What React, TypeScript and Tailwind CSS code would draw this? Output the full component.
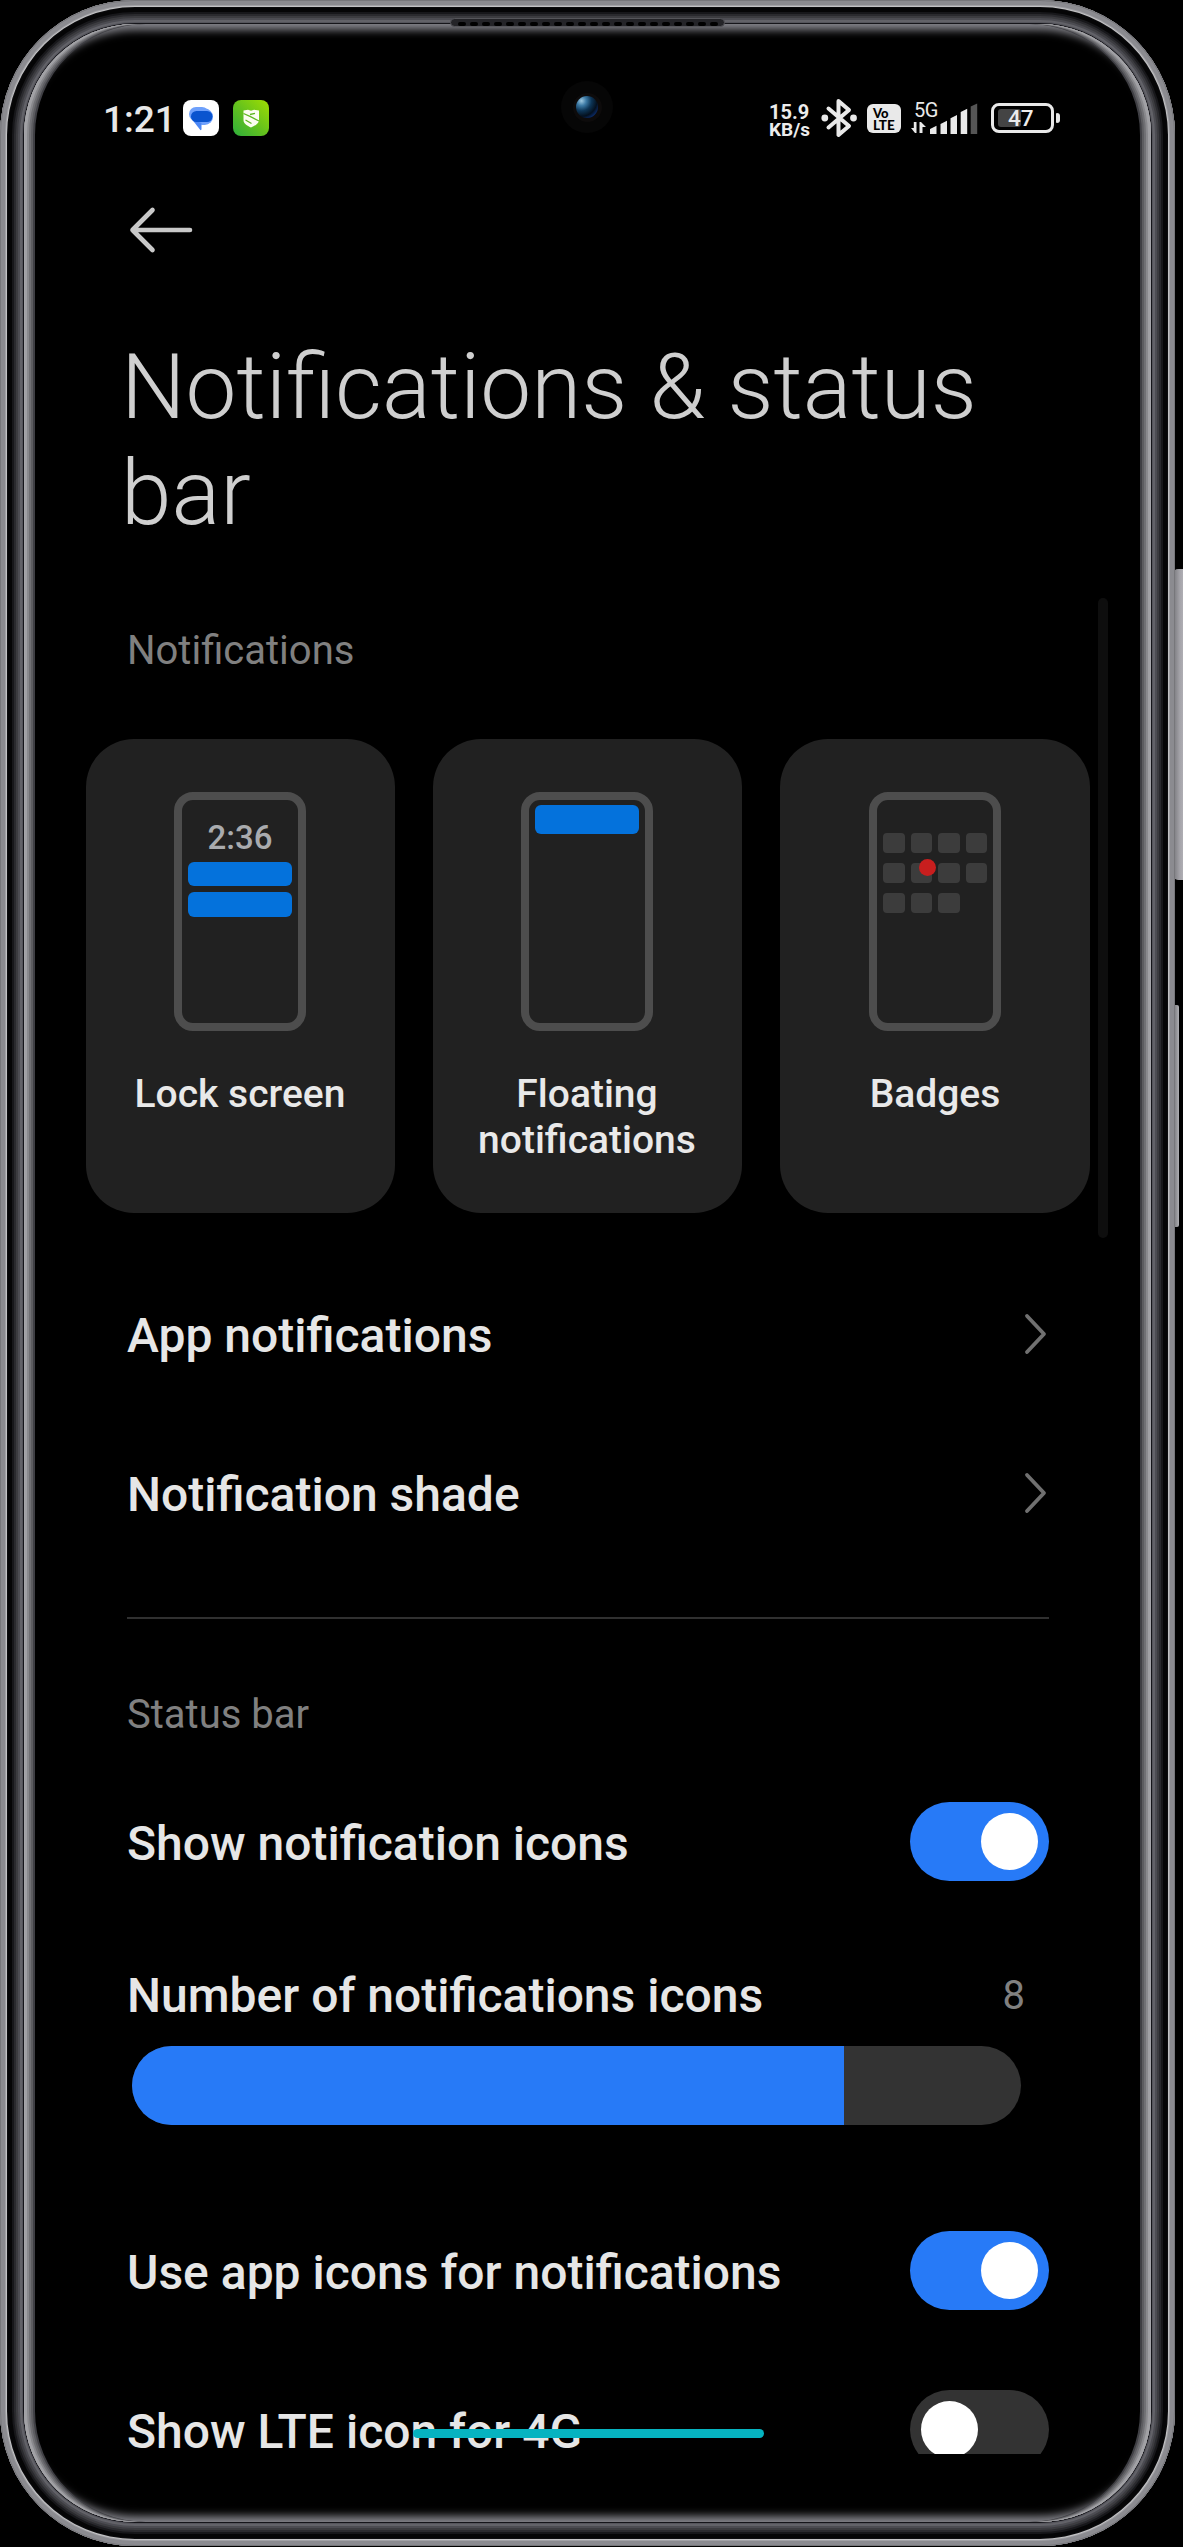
import React from "react";

const labelBase = "block font-medium text-[#e6e6e6] text-[48px] leading-[56px] whitespace-nowrap";

function Toggle({ on }: { on?: boolean }) {
  return (
    <span className={on ? "flex h-[79px] w-[139px] shrink-0 items-center justify-end rounded-full bg-[#277af7] p-[11px]" : "flex h-[79px] w-[139px] shrink-0 items-center rounded-full bg-[#333333] p-[11px]"}>
      <span className="h-[57px] w-[57px] rounded-full bg-white" />
    </span>
  );
}

function Chevron() {
  return (
    <svg className="mb-[3px] mr-[1px]" width="24" height="42" viewBox="0 0 24 42" fill="none" stroke="#707070" strokeWidth="3.8" strokeLinecap="round" strokeLinejoin="round">
      <path d="M3 3 L20 21 L3 39" />
    </svg>
  );
}

function Card({ label, wide, children }: { label: React.ReactNode; wide?: boolean; children: React.ReactNode }) {
  return (
    <div className={wide ? "flex h-[474px] w-[310px] shrink-0 flex-col items-center rounded-[48px] bg-[#212121] pt-[53px]" : "flex h-[474px] w-[309px] shrink-0 flex-col items-center rounded-[48px] bg-[#212121] pr-px pt-[53px]"}>
      <div className="h-[239px] w-[132px] rounded-[19px] border-[8px] border-[#4d4d4d] px-[6px]">{children}</div>
      <div className="mt-[40px] text-center text-[39px] font-medium leading-[46px] text-[#e9e9e9]">{label}</div>
    </div>
  );
}

function StatusBar() {
  return (
    <div className="flex h-[54px] items-center">
      <div className="w-[80px] pt-[3px] text-[37px] font-medium leading-[54px] text-[#e8e8e8]">1:21</div>
      <svg width="36" height="36" viewBox="0 0 36 36">
        <rect width="36" height="36" rx="8" fill="#fff" />
        <rect x="6" y="7" width="20" height="14" rx="7" fill="#6ea0fb" />
        <rect x="11" y="8.500" width="19" height="16.500" rx="8.200" fill="#6ea0fb" />
        <path d="M9.500 20l8 10.200c0.800 0 1-0.500 1-1.200V23z" fill="#4c87f5" />
        <rect x="8" y="11" width="21.500" height="11" rx="5.500" fill="#0a54cf" />
      </svg>
      <svg className="ml-[14px]" width="36" height="36" viewBox="0 0 36 36">
        <defs>
          <linearGradient id="lime" x1="0" y1="1" x2="1" y2="0">
            <stop offset="0" stopColor="#2dae3c" />
            <stop offset="0.5" stopColor="#66c21c" />
            <stop offset="1" stopColor="#a0de02" />
          </linearGradient>
        </defs>
        <rect width="36" height="36" rx="8" fill="url(#lime)" />
        <path d="M10.500 10.500l4.500-.7l3 1l3-1l5 .7v9.500c0 4-5 6-8 7.500c-3-1.500-7.500-3.500-7.500-7.500z" fill="#fbfdf0" />
        <path d="M10.500 13.500l7 3.200l8.500 4.300M12.500 20l6 3.500M17 14.500l5-1.200" stroke="#5fb821" strokeWidth="1.300" fill="none" />
      </svg>
      <div className="ml-[500px] w-[42px] pt-[6px] text-[20px] font-bold leading-[18px] text-[#ececec]">
        <div>15.9</div>
        <div className="text-[19px]">KB/s</div>
      </div>
      <svg className="ml-[10px]" width="37" height="40" viewBox="0 0 37 40" fill="none" stroke="#e9e9e9" strokeWidth="4" strokeLinecap="round" strokeLinejoin="round">
        <path d="M7.500 10.500 L28 28 L17.500 37 V3 L28 12 L7.500 29.500" />
        <circle cx="3.800" cy="20" r="3.400" fill="#e9e9e9" stroke="none" />
        <circle cx="32.500" cy="20" r="3.400" fill="#e9e9e9" stroke="none" />
      </svg>
      <div className="ml-[9px] mt-[1px] flex h-[29px] w-[34px] flex-col items-start rounded-[6px] bg-[#e9e9e9] pl-[6px] pt-[3px] font-['Lato'] text-[13px] font-black leading-[12px] text-black">
        <div>Vo</div>
        <div className="text-[13.5px] leading-[12px]">LTE</div>
      </div>
      <div className="relative ml-[10px] h-[34px] w-[68px]">
        <div className="absolute left-[3px] top-[-1px] text-[20px] leading-[20px] tracking-[-0.5px] text-[#e9e9e9]">5G</div>
        <svg className="absolute bottom-[1px] left-0" width="68" height="32" viewBox="0 0 68 32" fill="#e9e9e9">
          <path d="M5.500 20v11h-1.500L0 26h2.800V20zM8.500 31V20h1.500l5 5h-3.500v6z" />
          <path d="M19 27l6.500-3.300v8.300H19zM29.500 22l6.500-3.300v13.300h-6.500zM39.500 16.300l6.500-3.300v19h-6.500zM49.700 10l6.500-3.300v25.300h-6.500z" />
          <path d="M59.700 4.500l6.500-3v30.500h-6.500z" fill="#555" />
        </svg>
      </div>
      <div className="ml-[12px] flex h-[30px] w-[63px] items-center rounded-[8px] border-[3px] border-[#e9e9e9] pl-[4px]">
        <div className="flex h-[18px] w-[23px] items-center justify-start overflow-visible rounded-[3px] bg-[#444] pl-[10px] pt-[1px] text-[22.500px] font-medium text-[#ececec]">47</div>
      </div>
      <div className="ml-[2px] h-[10px] w-[4px] rounded-l-[1px] rounded-r-[3px] bg-[#e9e9e9]" />
    </div>
  );
}

const cells = [0, 1, 2, 3, 4, 5, 6, 7, 8, 9, 10];
const slots = Array.from({ length: 22 }, (_, i) => i);

export default function App() {
  return (
    <div className="relative h-[2547px] w-[1183px] overflow-hidden bg-black font-['Roboto',sans-serif]">
      {/* side keys */}
      <div className="absolute left-[1173px] top-[569px] h-[311px] w-[14px] rounded-[5px] bg-linear-to-r from-[#77777b] via-[#a5a4aa] to-[#bdbcc0]" />
      <div className="absolute left-[1173px] top-[1005px] h-[222px] w-[6px] rounded-[2px] bg-linear-to-r from-[#707074] to-[#b0b0b4]" />
      <div className="relative h-[2546px] w-[1175px] rounded-[135px] bg-black p-[24px] shadow-[inset_0_0_0_1px_#77777b,inset_0_0_0_5px_#8b8b90,inset_0_0_0_6px_#a2a2a6,inset_0_0_0_7px_#c2c2c4,inset_0_0_0_8px_#0c0c0e,inset_0_0_0_12px_#050506,inset_0_0_0_14px_#17171a,inset_0_0_0_16px_#2a2a2e,inset_0_0_0_18px_#3c3c40,inset_0_0_0_20px_#4c4c52,inset_0_0_0_22px_#626268,inset_0_0_0_23px_#55555c,inset_0_0_0_24px_#15151a]">
        <div className="flex h-full flex-col overflow-hidden rounded-[111px] bg-black px-[62px] shadow-[inset_1px_0_0_#a5a5a9,inset_-1px_0_0_#a5a5a9,inset_3px_0_0_#a0a0a4,inset_-3px_0_0_#a0a0a4,inset_5px_0_0_#89898d,inset_-5px_0_0_#89898d,inset_7px_0_0_#707074,inset_-7px_0_0_#707074,inset_9px_0_0_#5c5c60,inset_-9px_0_0_#5c5c60,inset_11px_0_0_#3f3f44,inset_-11px_0_0_#3f3f44,inset_0_8px_9px_-2px_#85858c,inset_0_-8px_9px_-2px_#85858c]">
          <div className="mt-[67px] pl-[17px]">
            <StatusBar />
          </div>
          <svg className="ml-[43px] mt-[61px] shrink-0" width="66" height="48" viewBox="0 0 66 48" fill="none" stroke="#c9c9c9" strokeWidth="4.600" strokeLinecap="round" strokeLinejoin="round">
            <path d="M23.500 4 L3.500 24 L23.500 44 M3.500 24 H61" />
          </svg>
          <h1 className="ml-[35px] mt-[80px] text-[90.9px] font-light leading-[106px] text-[#cfcfcf]">
            Notifications &amp; status
            <br />
            bar
          </h1>
          <div className="ml-[41px] mt-[81px] text-[40px] leading-[48px] text-[#808080]">Notifications</div>
          <div className="mt-[64px] flex gap-[38px]">
            <Card label="Lock screen">
              <div className="mt-[19px] text-center text-[33px] font-medium leading-[38px] text-[#a9abae]">2:36</div>
              <div className="mt-[5px] h-[24px] rounded-[6px] bg-[#0472dc]" />
              <div className="mt-[6px] h-[25px] rounded-[6px] bg-[#0472dc]" />
            </Card>
            <Card label={<>Floating<br />notifications</>}>
              <div className="mt-[5px] h-[29px] rounded-[6px] bg-[#0472dc]" />
            </Card>
            <Card label="Badges" wide>
              <div className="relative mt-[33px] grid grid-cols-4 gap-x-[6px] gap-y-[10px]">
                {cells.map((c) => (
                  <span key={c} className="h-[20px] rounded-[4px] bg-[#3c3c3c]" />
                ))}
                <span className="absolute left-[36px] top-[26px] h-[17px] w-[17px] rounded-full bg-[#c81e1e]" />
              </div>
            </Card>
          </div>
          <div className="ml-[41px] flex w-[922px] flex-col">
            <div className="mt-[90px] flex h-[65px] items-center justify-between">
              <span className={labelBase}>App notifications</span>
              <Chevron />
            </div>
            <div className="mt-[94px] flex h-[65px] items-center justify-between">
              <span className={labelBase}>Notification shade</span>
              <Chevron />
            </div>
            <div className="mt-[90px] h-[2px] bg-[#303030]" />
            <div className="mt-[72px] text-[40px] leading-[48px] text-[#808080]">Status bar</div>
            <div className="mt-[63px] flex h-[79px] items-center justify-between">
              <span className="pt-[4px]"><span className={labelBase}>Show notification icons</span></span>
              <Toggle on />
            </div>
            <div className="mt-[87px] flex h-[56px] items-center justify-between pr-[24px]">
              <span className={labelBase}>Number of notifications icons</span>
              <span className="text-[40px] leading-[56px] text-[#808080]">8</span>
            </div>
            <div className="ml-[5px] mt-[22px] h-[79px] w-[889px] overflow-hidden rounded-full bg-[#333333]">
              <div className="h-full w-[712px] bg-[#277af7]" />
            </div>
            <div className="mt-[106px] flex h-[79px] items-center justify-between">
              <span className="pt-[4px]"><span className={labelBase}>Use app icons for notifications</span></span>
              <Toggle on />
            </div>
            <div className="mt-[80px] flex items-start justify-between">
              <span className="pt-[14px]"><span className={labelBase}>Show LTE icon for 4G</span></span>
              <div className="h-[64px] overflow-hidden">
                <Toggle />
              </div>
            </div>
          </div>
        </div>
      </div>
      {/* earpiece */}
      <div className="absolute left-[450px] top-[18px] flex h-[9px] w-[275px] items-center justify-center gap-[4px] rounded-full border border-[#55555a] bg-[#242428] pt-[2px]">
        {slots.map((s) => (
          <span key={s} className="h-[4px] w-[8px] rounded-[2px] bg-black" />
        ))}
      </div>
      {/* front camera */}
      <div className="absolute left-[561px] top-[81px] flex h-[52px] w-[52px] items-center justify-center rounded-full bg-[#060606]">
        <div className="flex h-[29px] w-[29px] items-center justify-center rounded-full bg-[#0d0b0b]">
          <div className="h-[22px] w-[22px] rounded-full bg-[radial-gradient(circle_at_25%_22%,#9fc9e0_0%,#3d7ba6_20%,#0d3556_42%,#04101e_65%,#0a2a66_80%,#030508_92%)]" />
        </div>
      </div>
      {/* scroll indicator */}
      <div className="absolute left-[1098px] top-[598px] h-[640px] w-[10px] rounded-full bg-[#0e0e0e]" />
      {/* home gesture bar */}
      <div className="absolute left-[413px] top-[2429px] h-[9px] w-[351px] rounded-full bg-[#06b3c0]" />
    </div>
  );
}
